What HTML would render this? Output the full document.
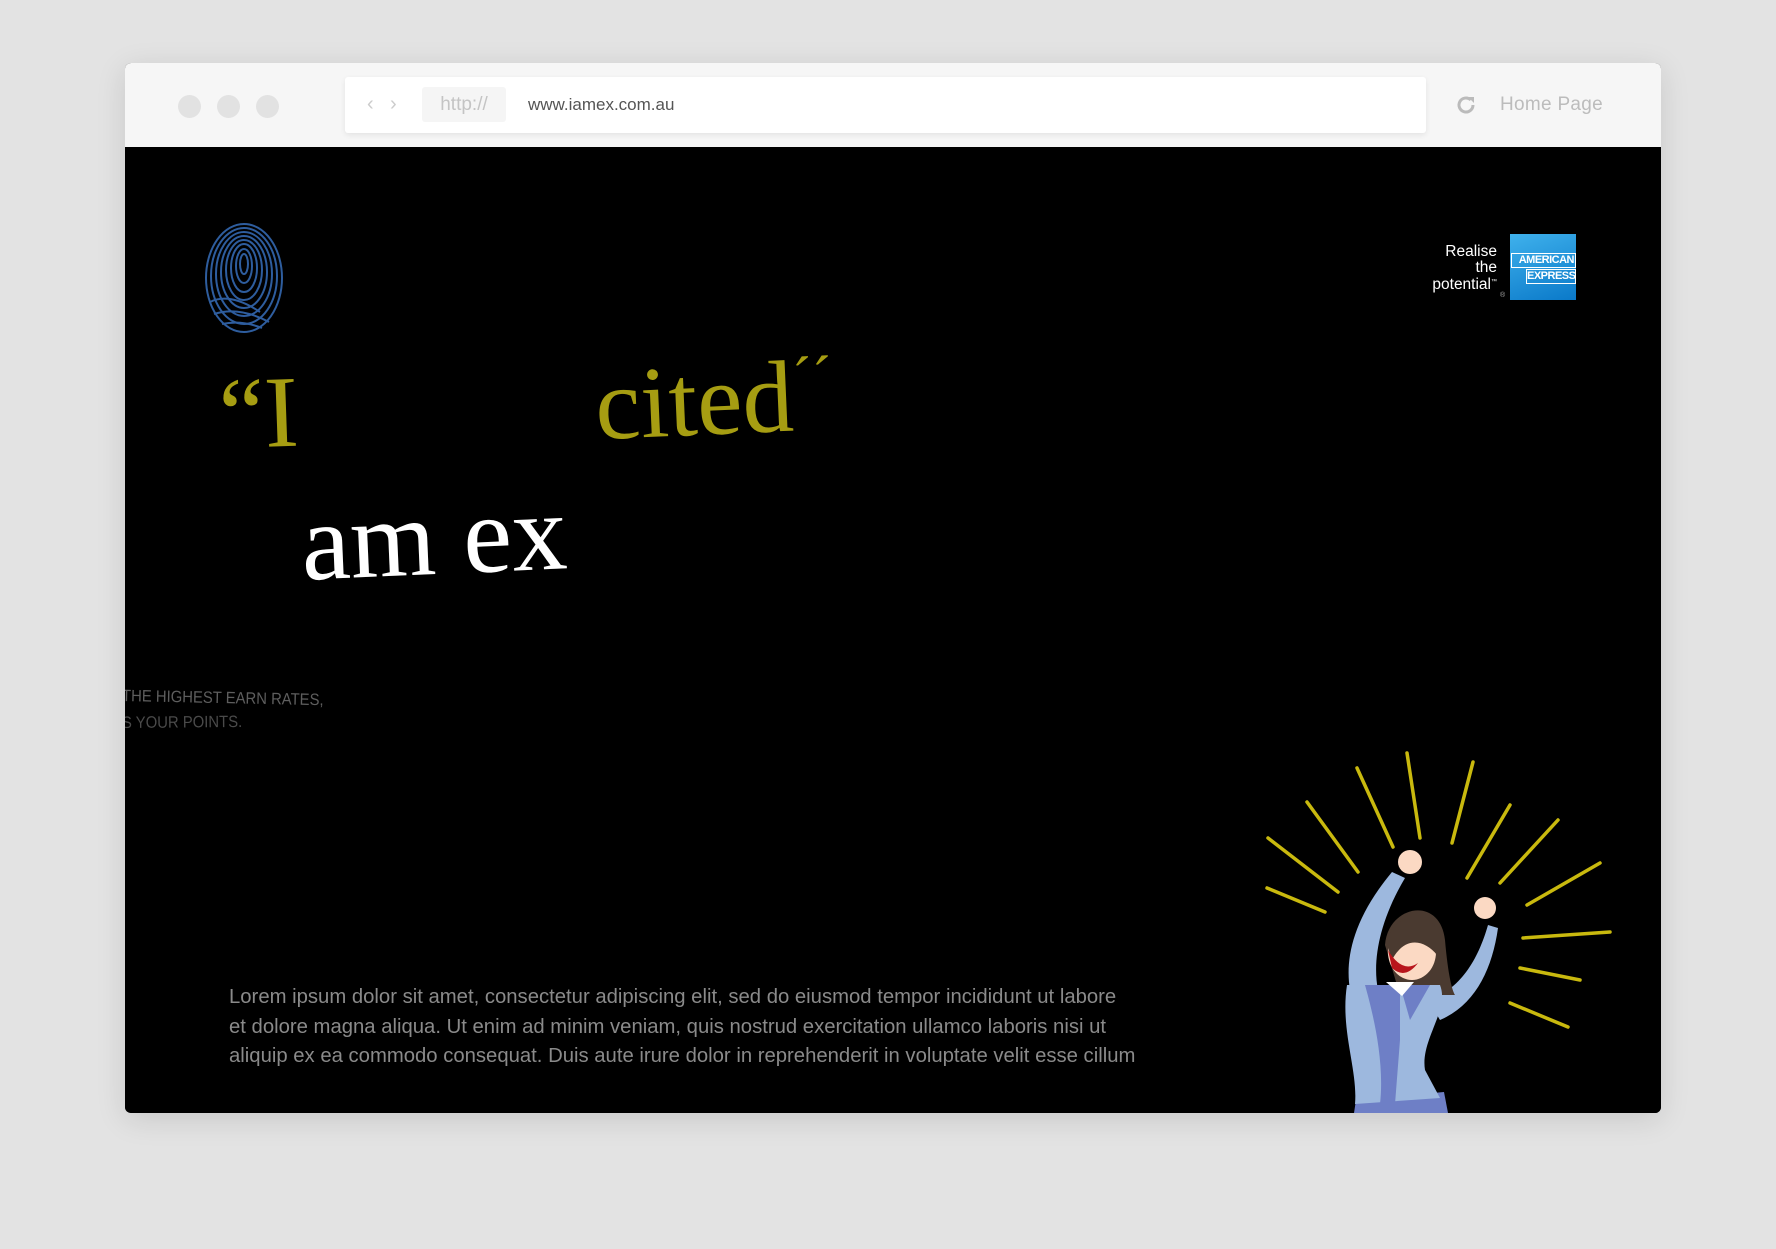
<!DOCTYPE html>
<html><head><meta charset="utf-8">
<style>
*{margin:0;padding:0;box-sizing:border-box}
body{width:1776px;height:1249px;background:#e3e3e3;position:relative;overflow:hidden;font-family:"Liberation Sans",sans-serif}
.win{position:absolute;left:125px;top:63px;width:1536px;height:1050px;border-radius:6px;overflow:hidden;box-shadow:0 6px 30px rgba(0,0,0,0.12);background:#000}
.bar{position:absolute;left:0;top:0;width:100%;height:84px;background:#f6f6f6}
.dot{position:absolute;top:32px;width:23px;height:23px;border-radius:50%;background:#e2e2e2}
.url{position:absolute;left:220px;top:14px;width:1081px;height:56px;background:#fff;border-radius:3px;box-shadow:0 2px 6px rgba(0,0,0,0.08)}
.http{position:absolute;left:77px;top:10px;width:84px;height:35px;background:#f5f5f5;border-radius:3px;color:#c4c4c4;font-size:19px;line-height:35px;text-align:center}
.addr{position:absolute;left:183px;top:0;line-height:56px;font-size:17px;color:#555}
.arr{position:absolute;top:0;line-height:54px;color:#ccc;font-size:20px}
.home{position:absolute;left:1375px;top:0;line-height:84px;font-size:19px;color:#bcbcbc;letter-spacing:0.3px}
.content{position:absolute;left:0;top:84px;width:100%;height:966px;background:#000;overflow:hidden}
.serif{font-family:"Liberation Serif",serif;position:absolute;white-space:nowrap}
.para{position:absolute;left:104px;top:836px;white-space:nowrap;color:#8a8a8a;font-size:20.3px;line-height:29.5px}
.side{position:absolute;color:#5e5e5e;font-size:16.5px;white-space:nowrap;font-family:"Liberation Sans Narrow","Liberation Sans",sans-serif;transform-origin:0 50%}
</style></head><body>
<div class="win">
  <div class="bar">
    <div class="dot" style="left:53px"></div>
    <div class="dot" style="left:92px"></div>
    <div class="dot" style="left:131px"></div>
    <div class="url">
      <div class="arr" style="left:22px">&#8249;</div>
      <div class="arr" style="left:45px">&#8250;</div>
      <div class="http">http://</div>
      <div class="addr">www.iamex.com.au</div>
    </div>
    <svg style="position:absolute;left:1329px;top:30px" width="24" height="24" viewBox="0 0 24 24"><path d="M19 12a7 7 0 1 1-2.2-5.1" fill="none" stroke="#bbb" stroke-width="3"/><path d="M14 4l6 0 0 6z" fill="#bbb"/></svg>
    <div class="home">Home Page</div>
  </div>
  <div class="content">
    <svg style="position:absolute;left:79px;top:75px" width="82" height="114" viewBox="0 0 82 114">
      <g fill="none" stroke="#2e5d9e" stroke-width="2">
        <ellipse cx="40" cy="56" rx="38" ry="54"/>
        <ellipse cx="40" cy="54" rx="33" ry="48"/>
        <ellipse cx="40" cy="52" rx="28" ry="42"/>
        <ellipse cx="40" cy="50" rx="23" ry="36"/>
        <ellipse cx="40" cy="48" rx="18" ry="30"/>
        <ellipse cx="40" cy="46" rx="13" ry="24"/>
        <ellipse cx="40" cy="44" rx="8" ry="17"/>
        <ellipse cx="40" cy="42" rx="4" ry="10"/>
        <path d="M6 80q20-10 50 10M10 92q25-8 55 8M18 102q20-4 40 4"/>
      </g>
    </svg>
    <div style="position:absolute;right:164px;top:97px;text-align:right;color:#fff;font-size:15.5px;line-height:15.5px">Realise<br>the<br>potential<sup style="font-size:6px">™</sup></div>
    <div style="position:absolute;left:1385px;top:87px;width:66px;height:66px;background:linear-gradient(160deg,#3fb1ec,#0a79c9);color:#fff;font-family:'Liberation Sans Narrow','Liberation Sans',sans-serif;font-weight:bold;font-size:11px;line-height:13px;padding-top:19px;text-align:right;letter-spacing:-0.5px;overflow:hidden">
      <div style="border:1px solid #fff;margin-left:1px;padding-right:1px">AMERICAN</div><div style="border:1px solid #fff;margin-left:16px;margin-top:1px">EXPRESS</div></div>
    <div style="position:absolute;left:1375px;top:145px;color:#aaa;font-size:7px">®</div>
    <div class="serif" style="left:94px;top:208px;font-size:102px;color:#a69d12;transform:rotate(-2deg)">“I</div>
    <div class="serif" style="left:470px;top:195px;font-size:102px;color:#a69d12;transform:rotate(-2.5deg)">cited<span style="font-size:60px;vertical-align:32px">´´</span></div>
    <div class="serif" style="left:176px;top:327px;font-size:110px;color:#fff;transform:rotate(-2.5deg)">am ex</div>
    <div class="side" style="left:-3px;top:540px;transform:rotate(1.2deg) scaleX(0.9)">THE HIGHEST EARN RATES,</div>
    <div class="side" style="left:-3px;top:567px;color:#4a4a4a;transform:rotate(-0.5deg) scaleX(0.9)">S YOUR POINTS.</div>
    <div class="para">Lorem ipsum dolor sit amet, consectetur adipiscing elit, sed do eiusmod tempor incididunt ut labore<br>et dolore magna aliqua. Ut enim ad minim veniam, quis nostrud exercitation ullamco laboris nisi ut<br>aliquip ex ea commodo consequat. Duis aute irure dolor in reprehenderit in voluptate velit esse cillum</div>
  </div>
</div>
<svg style="position:absolute;left:0;top:0" width="1776" height="1113" viewBox="0 0 1776 1113">
  <g stroke="#c9b90e" stroke-width="3.5" stroke-linecap="round">
    <line x1="1268" y1="838" x2="1338" y2="892"/>
    <line x1="1267" y1="888" x2="1325" y2="912"/>
    <line x1="1307" y1="802" x2="1358" y2="872"/>
    <line x1="1357" y1="768" x2="1393" y2="847"/>
    <line x1="1407" y1="753" x2="1420" y2="838"/>
    <line x1="1473" y1="762" x2="1452" y2="843"/>
    <line x1="1510" y1="805" x2="1467" y2="878"/>
    <line x1="1558" y1="820" x2="1500" y2="883"/>
    <line x1="1600" y1="863" x2="1527" y2="905"/>
    <line x1="1610" y1="932" x2="1523" y2="938"/>
    <line x1="1520" y1="968" x2="1580" y2="980"/>
    <line x1="1510" y1="1003" x2="1568" y2="1027"/>
  </g>
  <path d="M1356 1100 L1444 1092 L1448 1113 L1354 1113Z" fill="#6e7fc6"/>
  <path d="M1350 990 C1345 960 1352 920 1392 872 L1405 878 C1380 920 1372 960 1378 990Z" fill="#9db8de"/>
  <path d="M1428 1000 C1460 990 1478 960 1488 925 L1498 928 C1492 970 1475 1005 1440 1020Z" fill="#9db8de"/>
  <circle cx="1410" cy="862" r="12" fill="#fbd9c3"/>
  <circle cx="1485" cy="908" r="11" fill="#fbd9c3"/>
  <path d="M1385 945 C1388 905 1440 895 1445 940 C1448 975 1452 990 1455 995 L1400 995Z" fill="#4a3a30"/>
  <ellipse cx="1412" cy="952" rx="24" ry="28" fill="#fbd9c3"/>
  <path d="M1388 948 C1385 915 1430 905 1440 935 L1437 955 C1425 940 1405 935 1392 960Z" fill="#4a3a30"/>
  <path d="M1388 950 Q1402 974 1418 963 Q1405 980 1392 968Z" fill="#b8151c"/>
  <path d="M1347 985 L1440 985 C1450 1010 1420 1040 1425 1070 L1440 1098 L1355 1104 C1358 1070 1340 1030 1347 985Z" fill="#9db8de"/>
  <path d="M1365 985 L1400 985 L1400 1040 L1395 1104 L1380 1104 C1385 1060 1372 1010 1365 985Z" fill="#6e7fc6"/>
  <path d="M1400 985 L1430 985 L1410 1020Z" fill="#6e7fc6"/>
  <path d="M1386 982 L1402 996 L1414 982Z" fill="#fff"/>
</svg>
</body></html>
